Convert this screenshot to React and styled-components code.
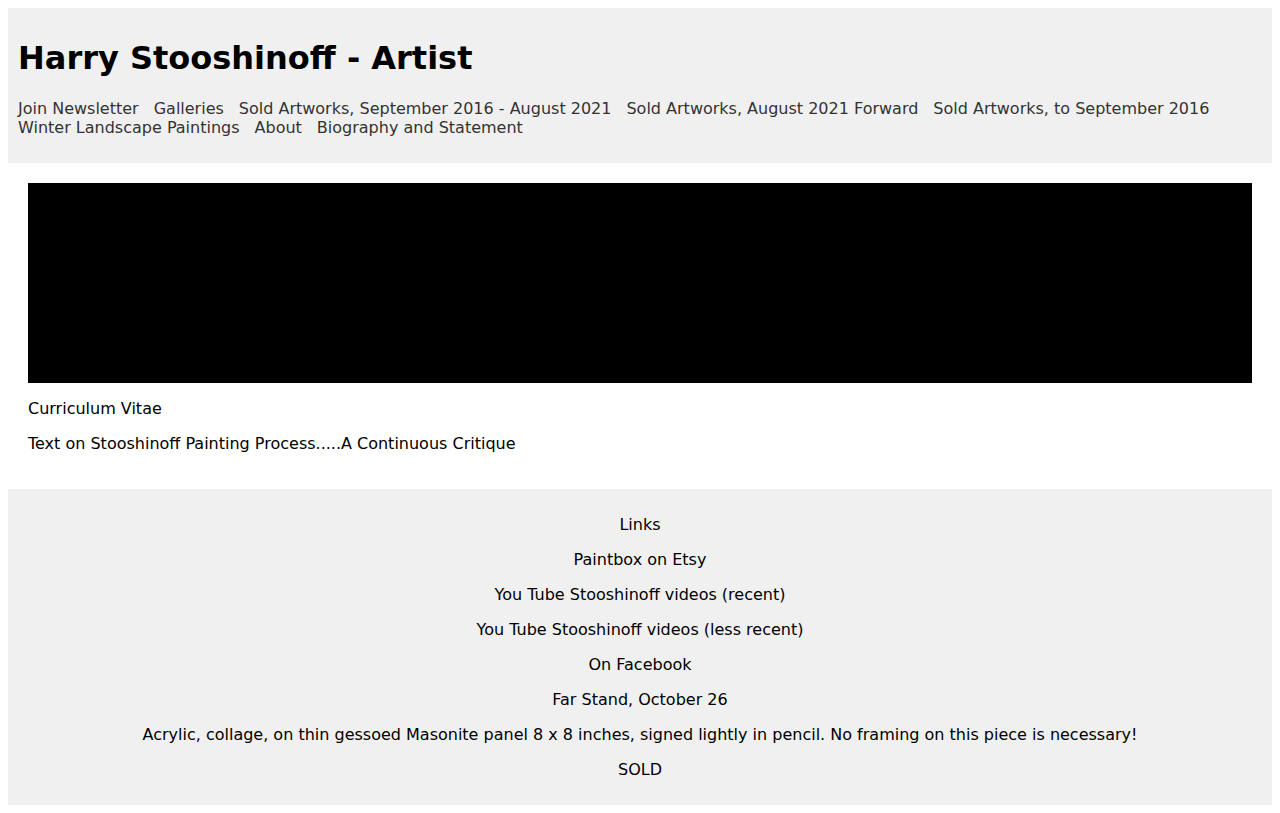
import React from "react";
import styled, { createGlobalStyle } from "styled-components";

const Global = createGlobalStyle`
  body {
    margin: 8px;
    font-family: "DejaVu Sans", Verdana, sans-serif;
    color: #000;
    background: #fff;
  }
`;

const Header = styled.header`
  background: #f0f0f0;
  padding: 10px;
`;

const Title = styled.h1`
  font-size: 32px;
  font-weight: bold;
  margin: 21.44px 0;
  color: #000;
`;

const Nav = styled.nav`
  display: flex;
  flex-wrap: wrap;
  column-gap: 15px;
  margin: 16px 0;
`;

const NavLink = styled.a`
  color: #333;
  font-size: 16px;
  text-decoration: none;
  line-height: normal;
`;

const Main = styled.main`
  padding: 20px;
`;

const Banner = styled.div`
  background: #000;
  height: 200px;
`;

const Para = styled.p`
  margin: 16px 0;
  font-size: 16px;
`;

const Footer = styled.footer`
  background: #f0f0f0;
  padding: 10px;
  text-align: center;
`;

const navItems = [
  "Join Newsletter",
  "Galleries",
  "Sold Artworks, September 2016 - August 2021",
  "Sold Artworks, August 2021 Forward",
  "Sold Artworks, to September 2016",
  "Winter Landscape Paintings",
  "About",
  "Biography and Statement",
];

const footerItems = [
  "Links",
  "Paintbox on Etsy",
  "You Tube Stooshinoff videos (recent)",
  "You Tube Stooshinoff videos (less recent)",
  "On Facebook",
  "Far Stand, October 26",
  "Acrylic, collage, on thin gessoed Masonite panel 8 x 8 inches, signed lightly in pencil. No framing on this piece is necessary!",
  "SOLD",
];

export default function App() {
  return (
    <>
      <Global />
      <Header>
        <Title>Harry Stooshinoff - Artist</Title>
        <Nav>
          {navItems.map((t) => (
            <NavLink key={t} href="#">
              {t}
            </NavLink>
          ))}
        </Nav>
      </Header>
      <Main>
        <Banner />
        <Para>Curriculum Vitae</Para>
        <Para>Text on Stooshinoff Painting Process.....A Continuous Critique</Para>
      </Main>
      <Footer>
        {footerItems.map((t) => (
          <Para key={t}>{t}</Para>
        ))}
      </Footer>
    </>
  );
}
